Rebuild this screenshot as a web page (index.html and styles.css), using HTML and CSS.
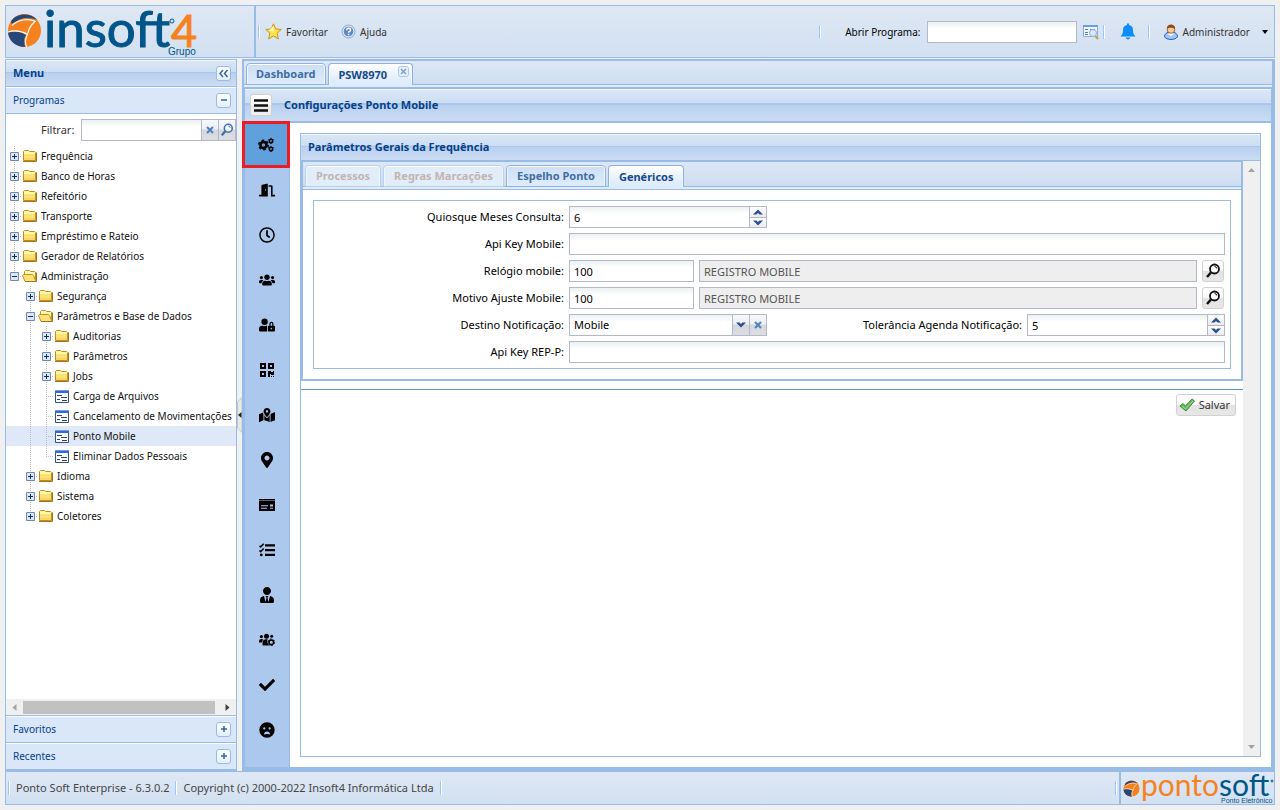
FILE: index.html
```html
<!DOCTYPE html>
<html lang="pt-BR">
<head>
<meta charset="utf-8">
<title>Ponto Soft Enterprise</title>
<link rel="stylesheet" href="styles.css">
</head>
<body>
<svg class="sprite" aria-hidden="true">
  <symbol id="folder" viewBox="0 0 16 16"><path d="M1.5 12.5v-9l1-1h4l1 1h5l1 1v8z" fill="#fff7a8" stroke="#bf8b1e"/><path d="M2 6h11v6H2z" fill="#fbe274"/><path d="M2 10h11v2H2z" fill="#f9d569"/><path d="M1 13.5h13.5v-9" fill="none" stroke="#a87511"/></symbol>
  <symbol id="folder-open" viewBox="0 0 16 16"><path d="M2.500 12.500v-9l1-1h4l1 1h4l1 1v8z" fill="#fff7b5" stroke="#bf8b1e"/><path d="M3 13.500L.5 7.500l1-1h9l1 1 2.500 6z" fill="#fde27c" stroke="#c28e1f"/><path d="M3 13.500h11.500v-9" fill="none" stroke="#a87511"/></symbol>
  <symbol id="form" viewBox="0 0 16 16"><path d="M1.500 2.500h13v12h-13z" fill="#f4f8ff" stroke="#3b5576"/><path d="M1 2h14v3H1z" fill="#3566d6"/><path d="M1 2h14v1H1z" fill="#6f9bf1"/><path d="M3 7.500h5M7 9.500h6M3 11.500h3M8 12.500h5" stroke="#38434f"/></symbol>
  <symbol id="plus" viewBox="0 0 16 16"><path d="M4.500 4.500h8v8h-8z" fill="#dde6f5" stroke="#7088b0"/><path d="M6 8.500h5M8.500 6v5" stroke="#14315f"/></symbol>
  <symbol id="minus" viewBox="0 0 16 16"><path d="M4.500 4.500h8v8h-8z" fill="#dde6f5" stroke="#7088b0"/><path d="M6 8.500h5" stroke="#14315f"/></symbol>
  <symbol id="up" viewBox="0 0 10 6"><path d="M0 5.500L5 .5l5 5H6.500L5 4 3.500 5.500z" fill="#2d4f8f"/></symbol>
  <symbol id="down" viewBox="0 0 10 6"><path d="M0 .5l5 5 5-5H6.500L5 2 3.500.5z" fill="#2d4f8f"/></symbol>
  <symbol id="close" viewBox="0 0 8 8"><path d="M1 1l6 6M7 1L1 7" stroke="#4b82bf" stroke-width="2"/></symbol>
  <symbol id="search" viewBox="0 0 16 16"><circle cx="9.500" cy="6" r="4.500" fill="#fff" fill-opacity=".7" stroke="currentColor" stroke-width="1.800"/><path d="M6 9.500L2 14" stroke="currentColor" stroke-width="2.500"/><path d="M9.500 3.500q2 0 2.300 2" fill="none" stroke="currentColor"/></symbol>
  <symbol id="globe" viewBox="0 0 36 36"><circle cx="18" cy="18" r="17" fill="#f6821f"/><path d="M4 9C9 0 24-1 31 7c-8-3-18-3-23 4-2 3-1 5-1 5z" fill="#27477b"/><path d="M1 20c6-2 14-1 19 2-3 4-3 8-1 13C9 35 2 29 1 20z" fill="#27477b"/><path d="M3 13c7-7 19-8 26-5-8 0-14 5-15 12C10 19 5 18 1 19z" fill="#f6821f"/><path d="M13 20c1-7 8-11 15-11-4 3-7 8-8 14-2-2-4-3-7-3z" fill="#f6821f"/><path d="M1 19.500c7-2 14-1 20 2.500 1-5 4-10 8-13.500C22 5 11 7 5 13M21 22c-2 4-3 8-1 13" fill="none" stroke="#fff" stroke-width="1.200"/></symbol>
</svg>

<header class="top">
  <div class="brand box" role="img" aria-label="Insoft4 Grupo">
    <svg width="192" height="50" viewBox="0 0 192 50"><use href="#globe" x="1" y="7" width="35" height="35"/>
      <text x="38" y="41" class="logo-big">insoft</text><text x="165" y="41" class="logo-four">4</text><circle cx="166" cy="15" r="2" fill="none" stroke="#00558a"/><text x="162" y="49" class="logo-sub">Grupo</text></svg>
  </div>
  <div class="toolbar box">
    <i class="sep"></i>
    <button class="tool"><svg width="17" height="17" viewBox="0 0 17 17"><path d="M8.500 .8l2.300 5.200 5.500.5-4.200 3.700 1.300 5.700-4.900-3-4.900 3 1.300-5.700L.7 6.500l5.500-.5z" fill="#ffe04d" stroke="#c79720" stroke-linejoin="round"/><path d="M8.500 3v5.500L4 7.500z" fill="#fff9c0"/></svg>Favoritar</button>
    <button class="tool help"><svg width="15" height="15" viewBox="0 0 15 15"><circle cx="7.500" cy="7.500" r="6.500" fill="#d9e5f4" stroke="#8fadd6"/><circle cx="7.500" cy="7.500" r="4.800" fill="#5f8ac4"/><path d="M5.700 6.200q0-2 1.900-2 1.900 0 1.900 1.700 0 .9-1 1.500-.9.500-.9 1.300m0 1v1.500" stroke="#fff" stroke-width="1.400" fill="none"/></svg>Ajuda</button>
    <span class="grow"></span>
    <i class="sep"></i>
    <label for="open-program" class="open-label">Abrir Programa:</label>
    <input id="open-program" class="field open-field">
    <button class="tool lookup" aria-label="Pesquisar programa"><svg width="17" height="16" viewBox="0 0 17 16"><path d="M1.500 1.500h14v11h-14z" fill="#edf4fd" stroke="#8daedb"/><path d="M1 1h15v2H1z" fill="#6f9edb"/><path d="M3 5.500h3M3 8.500h3M3 10.500h3M8 5.500h5" stroke="#5b7fb5"/><circle cx="11" cy="9" r="3.500" fill="#d7e8fa" stroke="#8fb3e0"/><path d="M13.500 12l2.500 3" stroke="#d09a52" stroke-width="2"/></svg></button>
    <i class="sep"></i>
    <button class="tool bell" aria-label="Notificações"><svg width="16" height="17" viewBox="0 0 16 17"><path d="M7 .5h2v1.500c3 .6 4 2.500 4 5 0 3 .7 4.500 2.500 6.500H.5C2.300 11.500 3 10 3 7c0-2.500 1-4.400 4-5zM5.500 14.500h5q-2.500 4-5 0z" fill="#0c8dff"/></svg></button>
    <i class="sep"></i>
    <button class="tool user"><svg width="16" height="16" viewBox="0 0 16 16"><path d="M1.500 13c0-3 2-5 6.500-5s6.500 2 6.500 5q-2 2.500-6.500 2.500t-6.500-2.500z" fill="#9ec6f7" stroke="#285fbd"/><path d="M5 10q3-2 6 0l-3 2z" fill="#fff"/><circle cx="8" cy="5.500" r="3.800" fill="#f6c99a" stroke="#a4622b"/><path d="M4 5c-1-6 9-6 8 0-2-1-6-2-8 0z" fill="#8b4a1c"/></svg>Administrador<svg class="caret" width="6" height="4" viewBox="0 0 6 4"><path d="M0 0h6L3 4z"/></svg></button>
  </div>
</header>

<div class="middle">
  <aside class="menu">
    <h2 class="bar">Menu<button class="sq" aria-label="Recolher"><svg width="11" height="9" viewBox="0 0 11 9"><path d="M5 1L2 4.500 5 8M9.500 1l-3 3.500 3 3.500" fill="none" stroke="#33679f" stroke-width="1.500"/></svg></button></h2>
    <h3 class="accordion">Programas<button class="sq" aria-label="Fechar programas"><svg width="8" height="8" viewBox="0 0 8 8"><path d="M1 4h6" stroke="#33679f" stroke-width="1.500"/></svg></button></h3>
    <div class="filter"><label for="filter">Filtrar:</label><input id="filter" class="field grow"><button class="trigger" aria-label="Limpar"><svg width="8" height="8"><use href="#close"/></svg></button><button class="trigger blue" aria-label="Filtrar"><svg width="14" height="14"><use href="#search"/></svg></button></div>
    <div class="tree">
      <div class="node"><i class="line mid"><svg><use href="#plus"/></svg></i><svg><use href="#folder"/></svg><a href="#">Frequência</a></div>
      <div class="node"><i class="line mid"><svg><use href="#plus"/></svg></i><svg><use href="#folder"/></svg><a href="#">Banco de Horas</a></div>
      <div class="node"><i class="line mid"><svg><use href="#plus"/></svg></i><svg><use href="#folder"/></svg><a href="#">Refeitório</a></div>
      <div class="node"><i class="line mid"><svg><use href="#plus"/></svg></i><svg><use href="#folder"/></svg><a href="#">Transporte</a></div>
      <div class="node"><i class="line mid"><svg><use href="#plus"/></svg></i><svg><use href="#folder"/></svg><a href="#">Empréstimo e Rateio</a></div>
      <div class="node"><i class="line mid"><svg><use href="#plus"/></svg></i><svg><use href="#folder"/></svg><a href="#">Gerador de Relatórios</a></div>
      <div class="node"><i class="line end"><svg><use href="#minus"/></svg></i><svg><use href="#folder-open"/></svg><a href="#">Administração</a></div>
      <div class="node"><i class="gap"></i><i class="line mid"><svg><use href="#plus"/></svg></i><svg><use href="#folder"/></svg><a href="#">Segurança</a></div>
      <div class="node"><i class="gap"></i><i class="line mid"><svg><use href="#minus"/></svg></i><svg><use href="#folder-open"/></svg><a href="#">Parâmetros e Base de Dados</a></div>
      <div class="node"><i class="gap"></i><i class="line"></i><i class="line mid"><svg><use href="#plus"/></svg></i><svg><use href="#folder"/></svg><a href="#">Auditorias</a></div>
      <div class="node"><i class="gap"></i><i class="line"></i><i class="line mid"><svg><use href="#plus"/></svg></i><svg><use href="#folder"/></svg><a href="#">Parâmetros</a></div>
      <div class="node"><i class="gap"></i><i class="line"></i><i class="line mid"><svg><use href="#plus"/></svg></i><svg><use href="#folder"/></svg><a href="#">Jobs</a></div>
      <div class="node"><i class="gap"></i><i class="line"></i><i class="line mid"></i><svg><use href="#form"/></svg><a href="#">Carga de Arquivos</a></div>
      <div class="node"><i class="gap"></i><i class="line"></i><i class="line mid"></i><svg><use href="#form"/></svg><a href="#">Cancelamento de Movimentações</a></div>
      <div class="node selected"><i class="gap"></i><i class="line"></i><i class="line mid"></i><svg><use href="#form"/></svg><a href="#">Ponto Mobile</a></div>
      <div class="node"><i class="gap"></i><i class="line"></i><i class="line end"></i><svg><use href="#form"/></svg><a href="#">Eliminar Dados Pessoais</a></div>
      <div class="node"><i class="gap"></i><i class="line mid"><svg><use href="#plus"/></svg></i><svg><use href="#folder"/></svg><a href="#">Idioma</a></div>
      <div class="node"><i class="gap"></i><i class="line mid"><svg><use href="#plus"/></svg></i><svg><use href="#folder"/></svg><a href="#">Sistema</a></div>
      <div class="node"><i class="gap"></i><i class="line end"><svg><use href="#plus"/></svg></i><svg><use href="#folder"/></svg><a href="#">Coletores</a></div>
    </div>
    <div class="hscroll"><svg width="5" height="7" viewBox="0 0 5 7"><path d="M4.500 0v7L.5 3.500z" fill="#a3a3a3"/></svg><i class="thumb"></i><svg width="5" height="7" viewBox="0 0 5 7"><path d="M.5 0v7l4-3.500z" fill="#404040"/></svg></div>
    <h3 class="accordion">Favoritos<button class="sq" aria-label="Abrir favoritos"><svg width="8" height="8" viewBox="0 0 8 8"><path d="M1 4h6M4 1v6" stroke="#33679f" stroke-width="1.500"/></svg></button></h3>
    <h3 class="accordion">Recentes<button class="sq" aria-label="Abrir recentes"><svg width="8" height="8" viewBox="0 0 8 8"><path d="M1 4h6M4 1v6" stroke="#33679f" stroke-width="1.500"/></svg></button></h3>
  </aside>
  <button class="splitter" aria-label="Recolher menu"><svg width="5" height="36" viewBox="0 0 5 36"><path d="M5 .5L.5 5v26L5 35.500z" fill="#e9e9e9" stroke="#c4c4c4"/><path d="M4.500 15v6l-3.500-3z" fill="#222"/></svg></button>

  <main class="main">
    <nav class="tabs">
      <button class="tab">Dashboard</button>
      <button class="tab active closable">PSW8970<svg width="11" height="11" viewBox="0 0 11 11"><rect x=".5" y=".5" width="10" height="10" rx="2" fill="#e6f0fc" stroke="#a9c8ee"/><path d="M3 3l5 5M8 3L3 8" stroke="#7da2d0" stroke-width="1.500"/></svg></button>
    </nav>
    <div class="program">
      <h1 class="bar title"><button class="burger" aria-label="Abrir opções"><svg width="14" height="13" viewBox="0 0 14 13"><path d="M0 1.500h14M0 6.500h14M0 11.500h14" stroke="#111" stroke-width="2.400"/></svg></button>Configurações Ponto Mobile</h1>
      <div class="work">
        <nav class="rail">
          <button class="current" aria-label="Parâmetros gerais"><svg viewBox="0 0 16 16"><circle cx="5.500" cy="8" r="3.100" fill="none" stroke="#000" stroke-width="2.600"/><circle cx="5.500" cy="8" r="4.800" fill="none" stroke="#000" stroke-width="1.400" stroke-dasharray="2.500 2.526"/><circle cx="13" cy="4" r="1.700" fill="none" stroke="#000" stroke-width="1.600"/><circle cx="13" cy="12" r="1.700" fill="none" stroke="#000" stroke-width="1.600"/><path d="M13 1v1M10.400 2.500l1 .5M15.600 2.500l-1 .5M13 6v1M13 9v1M10.400 10.500l1 .5M15.600 10.500l-1 .5M13 14v1" stroke="#000"/></svg></button>
          <button aria-label="Acessos"><svg viewBox="0 0 640 512"><path d="M624 448h-80V113.450C544 86.190 522.470 64 496 64H384v64h96v384h144c8.840 0 16-7.160 16-16v-32c0-8.840-7.160-16-16-16zM312.240 1.010l-192 49.740C105.990 54.440 96 67.700 96 82.920V448H16c-8.840 0-16 7.160-16 16v32c0 8.840 7.160 16 16 16h336V33.180c0-21.580-19.560-37.410-39.760-32.170zM264 288c-13.250 0-24-14.330-24-32s10.750-32 24-32 24 14.330 24 32-10.750 32-24 32z"/></svg></button>
          <button aria-label="Horários"><svg viewBox="0 0 512 512"><path d="M256 8C119 8 8 119 8 256s111 248 248 248 248-111 248-248S393 8 256 8zm0 448c-110.500 0-200-89.500-200-200S145.500 56 256 56s200 89.500 200 200-89.500 200-200 200zm61.800-104.400l-84.900-61.700c-3.100-2.300-4.900-5.900-4.900-9.700V116c0-6.600 5.400-12 12-12h32c6.600 0 12 5.400 12 12v141.700l66.800 48.600c5.400 3.900 6.500 11.400 2.600 16.800L334.600 349c-3.900 5.300-11.400 6.500-16.800 2.600z"/></svg></button>
          <button aria-label="Grupos"><svg viewBox="0 0 640 512"><path d="M96 224c35.300 0 64-28.700 64-64s-28.700-64-64-64-64 28.700-64 64 28.700 64 64 64zm448 0c35.300 0 64-28.700 64-64s-28.700-64-64-64-64 28.700-64 64 28.700 64 64 64zm32 32h-64c-17.600 0-33.500 7.100-45.100 18.600 40.300 22.100 68.900 62 75.100 109.400h66c17.700 0 32-14.300 32-32v-32c0-35.300-28.700-64-64-64zm-256 0c61.900 0 112-50.100 112-112S381.900 32 320 32 208 82.100 208 144s50.100 112 112 112zm76.800 32h-8.300c-20.800 10-43.900 16-68.500 16s-47.600-6-68.500-16h-8.300C179.600 288 128 339.600 128 403.200V432c0 26.500 21.500 48 48 48h288c26.500 0 48-21.500 48-48v-28.800c0-63.600-51.600-115.200-115.200-115.200zm-223.700-13.400C161.500 263.100 145.600 256 128 256H64c-35.300 0-64 28.700-64 64v32c0 17.700 14.300 32 32 32h65.900c6.300-47.400 34.900-87.300 75.200-109.400z"/></svg></button>
          <button aria-label="Permissões"><svg viewBox="0 0 640 512"><path d="M224 256A128 128 0 1 0 96 128a128 128 0 0 0 128 128zm96 64a63.080 63.080 0 0 1 8.100-30.500c-4.800-.5-9.500-1.500-14.500-1.500h-16.700a174.080 174.080 0 0 1-145.800 0h-16.700A134.430 134.430 0 0 0 0 422.400V464a48 48 0 0 0 48 48h280.900a63.540 63.540 0 0 1-8.900-32zm288-32h-32v-80a80 80 0 0 0-160 0v80h-32a32 32 0 0 0-32 32v160a32 32 0 0 0 32 32h224a32 32 0 0 0 32-32V320a32 32 0 0 0-32-32zM496 432a32 32 0 1 1 32-32 32 32 0 0 1-32 32zm32-144h-64v-80a32 32 0 0 1 64 0z"/></svg></button>
          <button aria-label="QR Code"><svg viewBox="0 0 448 512"><path d="M0 224h192V32H0v192zM64 96h64v64H64V96zm192-64v192h192V32H256zm128 128h-64V96h64v64zM0 480h192V288H0v192zm64-128h64v64H64v-64zm352-64h32v128h-96v-32h-32v96h-64V288h96v32h64v-32zm0 160h32v32h-32v-32zm-64 0h32v32h-32v-32z"/></svg></button>
          <button aria-label="Mapa"><svg viewBox="0 0 576 512"><path d="M288 0c-69.590 0-126 56.410-126 126 0 56.260 82.350 158.800 113.900 196.020 6.390 7.540 17.820 7.540 24.200 0C331.650 284.800 414 182.260 414 126 414 56.410 357.590 0 288 0zm0 168c-23.200 0-42-18.800-42-42s18.800-42 42-42 42 18.800 42 42-18.800 42-42 42zM20.120 215.950A32.006 32.006 0 0 0 0 245.660v250.320c0 11.320 11.430 19.060 21.940 14.860L160 448V214.920c-8.840-15.980-16.070-31.540-21.250-46.420L20.120 215.950zM288 359.670c-14.070 0-27.380-6.180-36.510-16.960-19.660-23.200-40.570-49.620-59.490-76.720v182l192 64V266c-18.920 27.090-39.820 53.520-59.490 76.720-9.130 10.770-22.440 16.950-36.510 16.950zm266.060-198.510L416 224v288l139.880-55.950A31.996 31.996 0 0 0 576 426.340V176.020c0-11.320-11.430-19.060-21.940-14.860z"/></svg></button>
          <button aria-label="Local"><svg viewBox="0 0 384 512"><path d="M172.268 501.670C26.970 291.031 0 269.413 0 192 0 85.961 85.961 0 192 0s192 85.961 192 192c0 77.413-26.970 99.031-172.268 309.670-9.535 13.774-29.930 13.773-39.464 0zM192 272c44.183 0 80-35.817 80-80s-35.817-80-80-80-80 35.817-80 80 35.817 80 80 80z"/></svg></button>
          <button aria-label="Cartão"><svg viewBox="0 0 16 16"><path d="M0 2h16v1.500H0zM0 4h16v9.500a.5.500 0 0 1-.5.500H.5a.5.500 0 0 1-.5-.5zm2 4.300v1h7v-1zm0 2.500v1h6v-1zM11 7.500v2h3v-2zm0 3.300v1h3v-1z" fill-rule="evenodd"/></svg></button>
          <button aria-label="Tarefas"><svg viewBox="0 0 16 16"><path d="M6 2.300h10v2.200H6zM6 7h10v2.200H6zM6 11.800h10V14H6z"/><circle cx="2.300" cy="12.900" r="1.400"/><path d="M.5 3.700l1.200 1.200 3-3.200M.5 8.400l1.200 1.200 3-3.200" fill="none" stroke="#000" stroke-width="1.500"/></svg></button>
          <button aria-label="Gestor"><svg viewBox="0 0 448 512"><path d="M224 256c70.700 0 128-57.300 128-128S294.700 0 224 0 96 57.300 96 128s57.300 128 128 128zm95.800 32.600L272 480l-32-136 32-56h-96l32 56-32 136-47.800-191.400C56.900 292 0 350.300 0 422.400V464c0 26.500 21.500 48 48 48h352c26.500 0 48-21.500 48-48v-41.600c0-72.100-56.900-130.400-128.200-133.800z"/></svg></button>
          <button aria-label="Equipe"><svg viewBox="0 0 16 16"><circle cx="2.400" cy="4.600" r="1.600"/><circle cx="7.500" cy="4.200" r="2.500"/><circle cx="12.700" cy="4.300" r="1.500"/><path d="M0 9.500C0 7.800.8 7 2.400 7c1 0 1.500.3 2 .7C3.400 8.600 3 9.300 2.900 10.500H0zM3.500 13V11C3.500 8.500 5 7.300 7.200 7.300h1.500c-.7 1.700-.6 4.700 1.700 6.200H4z"/><circle cx="12.300" cy="10.300" r="2.300" fill="none" stroke="#000" stroke-width="1.600"/><circle cx="12.300" cy="10.300" r="3.300" fill="none" stroke="#000" stroke-width="1" stroke-dasharray="1.700 1.755"/></svg></button>
          <button aria-label="Aprovações"><svg viewBox="0 0 512 512"><path d="M173.898 439.404l-166.400-166.400c-9.997-9.997-9.997-26.206 0-36.204l36.203-36.204c9.997-9.998 26.207-9.998 36.204 0L192 312.690 432.095 72.596c9.997-9.997 26.207-9.997 36.204 0l36.203 36.204c9.997 9.997 9.997 26.206 0 36.204l-294.400 294.401c-9.998 9.997-26.207 9.997-36.204-.001z"/></svg></button>
          <button aria-label="Ocorrências"><svg viewBox="0 0 16 16"><path fill-rule="evenodd" d="M8 .3a7.700 7.700 0 1 0 0 15.400A7.700 7.700 0 0 0 8 .3zM5.300 5.300a1.100 1.100 0 1 1 0 2.200 1.100 1.100 0 0 1 0-2.200zm5.400 0a1.100 1.100 0 1 1 0 2.200 1.100 1.100 0 0 1 0-2.200zM8 9.500c1.800 0 2.900 1.300 2.900 2.400 0 .5-.5.6-.9.500-1.300-.5-2.700-.5-4 0-.4.100-.9 0-.9-.5 0-1.100 1.100-2.400 2.900-2.400z"/></svg></button>
        </nav>
        <section class="panel">
          <h2 class="bar">Parâmetros Gerais da Frequência</h2>
          <div class="scroller">
            <div class="content">
              <div class="tabpanel">
                <nav class="tabs inner">
                  <button class="tab" disabled>Processos</button>
                  <button class="tab" disabled>Regras Marcações</button>
                  <button class="tab">Espelho Ponto</button>
                  <button class="tab active">Genéricos</button>
                </nav>
                <form class="form">
                  <div class="pair"><div class="row"><label for="quiosque">Quiosque Meses Consulta:</label><span class="control"><input id="quiosque" class="field grow" value="6"><span class="spin"><button type="button" aria-label="Aumentar"><svg width="10" height="6"><use href="#up"/></svg></button><button type="button" aria-label="Diminuir"><svg width="10" height="6"><use href="#down"/></svg></button></span></span></div></div>
                  <div class="row"><label for="apikey">Api Key Mobile:</label><input id="apikey" class="field grow"></div>
                  <div class="row"><label for="relogio">Relógio mobile:</label><input id="relogio" class="field code" value="100"><input class="field grow" aria-label="Descrição do relógio" value="REGISTRO MOBILE" disabled><button type="button" class="btn find" aria-label="Pesquisar relógio"><svg width="16" height="16"><use href="#search"/></svg></button></div>
                  <div class="row"><label for="motivo">Motivo Ajuste Mobile:</label><input id="motivo" class="field code" value="100"><input class="field grow" aria-label="Descrição do motivo" value="REGISTRO MOBILE" disabled><button type="button" class="btn find" aria-label="Pesquisar motivo"><svg width="16" height="16"><use href="#search"/></svg></button></div>
                  <div class="pair">
                    <div class="row"><label for="destino">Destino Notificação:</label><span class="control"><select id="destino" class="field grow"><option>Mobile</option></select><button type="button" class="trigger" aria-label="Abrir lista"><svg width="10" height="6"><use href="#down"/></svg></button><button type="button" class="trigger" aria-label="Limpar destino"><svg width="8" height="8"><use href="#close"/></svg></button></span></div>
                    <div class="row"><label for="tolerancia">Tolerância Agenda Notificação:</label><span class="control"><input id="tolerancia" class="field grow" value="5"><span class="spin"><button type="button" aria-label="Aumentar tolerância"><svg width="10" height="6"><use href="#up"/></svg></button><button type="button" aria-label="Diminuir tolerância"><svg width="10" height="6"><use href="#down"/></svg></button></span></span></div>
                  </div>
                  <div class="row"><label for="repp">Api Key REP-P:</label><input id="repp" class="field grow"></div>
                </form>
              </div>
              <div class="actions"><button class="btn save"><svg width="16" height="16" viewBox="0 0 16 16"><path d="M1 9l3-2.500L6.500 9 13 2l2.500 2L7 14z" fill="#65b85a" stroke="#3d8b3a"/><path d="M3 9l3.500 3L14 4" fill="none" stroke="#a4df97"/></svg>Salvar</button></div>
            </div>
            <div class="vscroll"><svg width="7" height="4" viewBox="0 0 7 4"><path d="M0 4h7L3.500 0z"/></svg><svg width="7" height="4" viewBox="0 0 7 4"><path d="M0 0h7L3.500 4z"/></svg></div>
          </div>
        </section>
      </div>
    </div>
  </main>
</div>

<footer class="status">
  <div class="info box"><i class="sep"></i><span>Ponto Soft Enterprise - 6.3.0.2</span><i class="sep"></i><span>Copyright (c) 2000-2022 Insoft4 Informática Ltda</span><i class="sep"></i><i class="grow"></i><i class="sep"></i></div>
  <div class="box product" role="img" aria-label="Pontosoft Ponto Eletrônico"><svg width="153" height="32" viewBox="0 0 153 32"><use href="#globe" x="2" y="8" width="17" height="17"/><text x="20" y="24" class="ps-orange">ponto<tspan fill="#00558a">soft</tspan></text><circle cx="151" cy="9" r="1" fill="none" stroke="#00558a"/><text x="100" y="31" class="ps-sub">Ponto Eletrônico</text></svg></div>
</footer>
</body>
</html>
```
FILE: styles.css
```css
* { box-sizing: border-box; }
body {
  margin: 0; padding: 5px; min-height: 100vh; display: flex; flex-direction: column;
  background: #f0f0f0; font: 11px/14px "Noto Sans", sans-serif; color: #333;
}
button, input, select { font: inherit; color: inherit; margin: 0; padding: 0; }
button { border: 0; background: none; cursor: pointer; }
h1, h2, h3 { margin: 0; font-size: 11px; }
svg { display: block; flex: none; }
.sprite { position: absolute; width: 0; height: 0; }
.grow { flex: 1; min-width: 0; }
.box { border: 1px solid #99bbe8; background: linear-gradient(#dfe8f4, #d2e0f1); }
.sep { width: 2px; height: 14px; border-left: 1px solid #98c8ff; border-right: 1px solid #fff; flex: none; }

.top { display: flex; height: 53px; margin-bottom: 1px; }
.brand { width: 250px; }
.brand svg, .product svg { overflow: visible; }
.logo-big { font: 51px Lato, sans-serif; fill: #00558a; stroke: #00558a; stroke-width: 1px; }
.logo-four { font: 45px Lato, sans-serif; fill: #f6821f; stroke: #f6821f; stroke-width: 1px; }
.logo-sub { font: 10px "Liberation Sans", sans-serif; fill: #00558a; }
.toolbar { flex: 1; display: flex; align-items: center; padding: 0 6px 0 2px; font-size: 10px; }
.tool { display: flex; align-items: center; gap: 4px; margin-left: 5px; }
.help { margin-left: 13px; }
.open-label { margin: 0 6px 0 24px; color: #000; }
.open-field { width: 150px; height: 20px; }
.lookup { margin-right: 4px; }
.bell { margin: 0 12px 0 15px; }
.user { margin-left: 13px; }
.caret { margin-left: 8px; }

.field {
  height: 22px; padding: 0 4px; border: 1px solid #b5b8c8; border-radius: 0; outline: 0;
  color: #000; background: linear-gradient(#edf1f1, #fff 7px); appearance: none;
}
.field:disabled { background: #eee; color: #555; }
.trigger {
  width: 17px; height: 22px; flex: none; display: grid; place-items: center;
  border: 1px solid #b5b8c8; border-left: 0; background: linear-gradient(#f7f8fa, #eceff4 45%, #d4d7dc 50%, #dcdee2);
}
.blue { color: #3b6fa8; }

.middle { flex: 1; display: flex; }
.menu { width: 232px; display: flex; flex-direction: column; border: 1px solid #99bbe8; background: #fff; }
.bar {
  display: flex; align-items: center; height: 27px; padding: 0 5px 0 7px; color: #04408c; font-weight: 700;
  border-bottom: 1px solid #99bbe8; box-shadow: inset 0 1px #f0f6fc;
  background: linear-gradient(#dae7f6, #cddef3 45%, #abc7ec 45%, #abc7ec 49%, #b8cfee 49%, #cbddf3);
}
.accordion {
  display: flex; align-items: center; height: 27px; padding: 0 5px 0 7px; color: #04408c; font-size: 10px; font-weight: 400;
  background: #d9e7f8; border-bottom: 1px solid #99bbe8; box-shadow: inset 0 1px #fff;
}
.sq {
  width: 15px; height: 15px; margin-left: auto; display: grid; place-items: center;
  border: 1px solid #99bbe8; border-radius: 3px; background: linear-gradient(#fff, #e3eefb);
}
.filter { display: flex; align-items: center; padding: 5px 0 5px 35px; }
.filter label { margin-right: 7px; }
.tree { flex: 1; overflow: hidden; font-size: 10px; color: #000; }
.node { display: flex; align-items: center; height: 20px; }
.node svg { width: 16px; height: 16px; }
.node a { color: #111; text-decoration: none; white-space: nowrap; margin-left: 3px; }
.selected { background: #dfe8f6; }
.gap, .line { width: 16px; height: 20px; flex: none; display: flex; align-items: center; }
.line { background: repeating-linear-gradient(#bbb 0 1px, transparent 1px 2px) 8px 0 / 1px 20px no-repeat; }
.mid {
  background: repeating-linear-gradient(#bbb 0 1px, transparent 1px 2px) 8px 0 / 1px 20px no-repeat,
    repeating-linear-gradient(90deg, #bbb 0 1px, transparent 1px 2px) 8px 10px / 8px 1px no-repeat;
}
.end {
  background: repeating-linear-gradient(#bbb 0 1px, transparent 1px 2px) 8px 0 / 1px 10px no-repeat,
    repeating-linear-gradient(90deg, #bbb 0 1px, transparent 1px 2px) 8px 10px / 8px 1px no-repeat;
}
.hscroll { display: flex; align-items: center; gap: 6px; height: 17px; padding: 0 6px; background: #f0f0f0; border-bottom: 1px solid #99bbe8; }
.thumb { flex: 1; height: 13px; margin-right: 4px; background: #c1c1c1; }
.splitter { width: 5px; flex: none; display: flex; align-items: center; background: #f0f0f0; }

.main { flex: 1; min-width: 0; display: flex; flex-direction: column; border: 2px solid #99bbe8; border-width: 2px 3px 3px 2px; }
.tabs {
  display: flex; align-items: flex-end; gap: 2px; height: 26px; padding: 0 2px 2px;
  background: linear-gradient(#deecfd, #deecfd) 0 100% / 100% 2px no-repeat, linear-gradient(#99bbe8, #99bbe8) 0 calc(100% - 2px) / 100% 1px no-repeat, linear-gradient(#dde8f5, #cbdbef);
}
.tab {
  height: 22px; padding: 0 10px; border: 1px solid #8db2e3; border-radius: 4px 4px 0 0; color: #416da3; font-weight: 700;
  background: linear-gradient(#cddff5, #deecfd); box-shadow: inset 0 1px #fff, inset 1px 0 #f0f6fe, inset -1px 0 #f0f6fe;
}
.tabs:not(.inner) .tab { padding-left: 9px; }
.tab.active { border-bottom: 0; color: #15498b; background: linear-gradient(#fff, #deecfd 80%); }
.tab:disabled { color: #c3b3b3; border-color: #b9d0ee; background: #e2edfa; }
.closable { display: flex; align-items: center; gap: 11px; padding-right: 3px; }
.closable svg { align-self: flex-start; margin-top: 2px; }
.program { flex: 1; display: flex; flex-direction: column; border: 1px solid #99bbe8; border-top-width: 2px; }
.title { height: 34px; border-bottom-width: 2px; padding-left: 5px; gap: 12px; }
.burger { width: 22px; height: 22px; display: grid; place-items: center; border: 1px solid #d1d1d1; border-radius: 3px; background: linear-gradient(#fff, #f9f9f9 48%, #e8e8e8 52%, #f0f0f0); }
.work { flex: 1; display: flex; background: #fff; }
.rail { width: 45px; flex: none; margin-top: -1px; background: #adc8ed; border-right: 1px solid #99bbe8; display: flex; flex-direction: column; }
.rail button { height: 45px; display: grid; place-items: center; }
.rail svg { width: 16px; height: 16px; }
.rail .current { height: 41px; margin: 2px 2px 2px 0; background: #5fa0dd; outline: 3px solid #ed1c24; z-index: 1; }
.panel { flex: 1; min-width: 0; margin: 10px; border: 1px solid #99bbe8; display: flex; flex-direction: column; }
.scroller { flex: 1; display: flex; }
.content { flex: 1; min-width: 0; }
.vscroll { width: 17px; flex: none; display: flex; flex-direction: column; justify-content: space-between; align-items: center; padding: 7px 0; background: #f0f0f0; fill: #a3a3a3; }
.tabpanel { border: 2px solid #99bbe8; border-top-width: 1px; }
.inner { height: 28px; border-bottom: 1px solid #99bbe8; }
.form { margin: 10px; padding: 5px; border: 1px solid #99bbe8; display: flex; flex-direction: column; gap: 5px; color: #000; }
.row { display: flex; align-items: center; gap: 5px; }
.row label { width: 245px; flex: none; text-align: right; }
.pair { display: grid; grid-template-columns: 1fr 1fr; column-gap: 10px; }
.control { flex: 1; min-width: 0; display: flex; }
.spin { width: 17px; height: 22px; display: grid; grid-template-rows: 1fr 1fr; border: 1px solid #b5b8c8; border-left: 0; }
.spin button { display: grid; place-items: center; background: linear-gradient(#fff, #ebebee); }
.spin button + button { border-top: 1px solid #b5b8c8; }
.code { width: 125px; }
.btn { border: 1px solid #d1d1d1; border-radius: 3px; color: #333; background: linear-gradient(#fff, #f9f9f9 48%, #e2e2e2 52%, #e7e7e7); height: 22px; }
.find { width: 22px; margin-right: 1px; display: grid; place-items: center; color: #111; }
.actions { margin-top: 8px; padding: 4px 7px; border-top: 1px solid #5b94d6; display: flex; justify-content: flex-end; }
.save { display: flex; align-items: center; gap: 4px; padding: 0 5px 0 2px; }

.status { display: flex; height: 34px; }
.info { flex: 1; display: flex; align-items: center; gap: 6px; padding: 0 2px; color: #444; }
.product { width: 155px; }
.ps-orange { font: 30px Lato, sans-serif; fill: #f6821f; }
.ps-sub { font: 7px "Liberation Sans", sans-serif; fill: #00558a; }
```
